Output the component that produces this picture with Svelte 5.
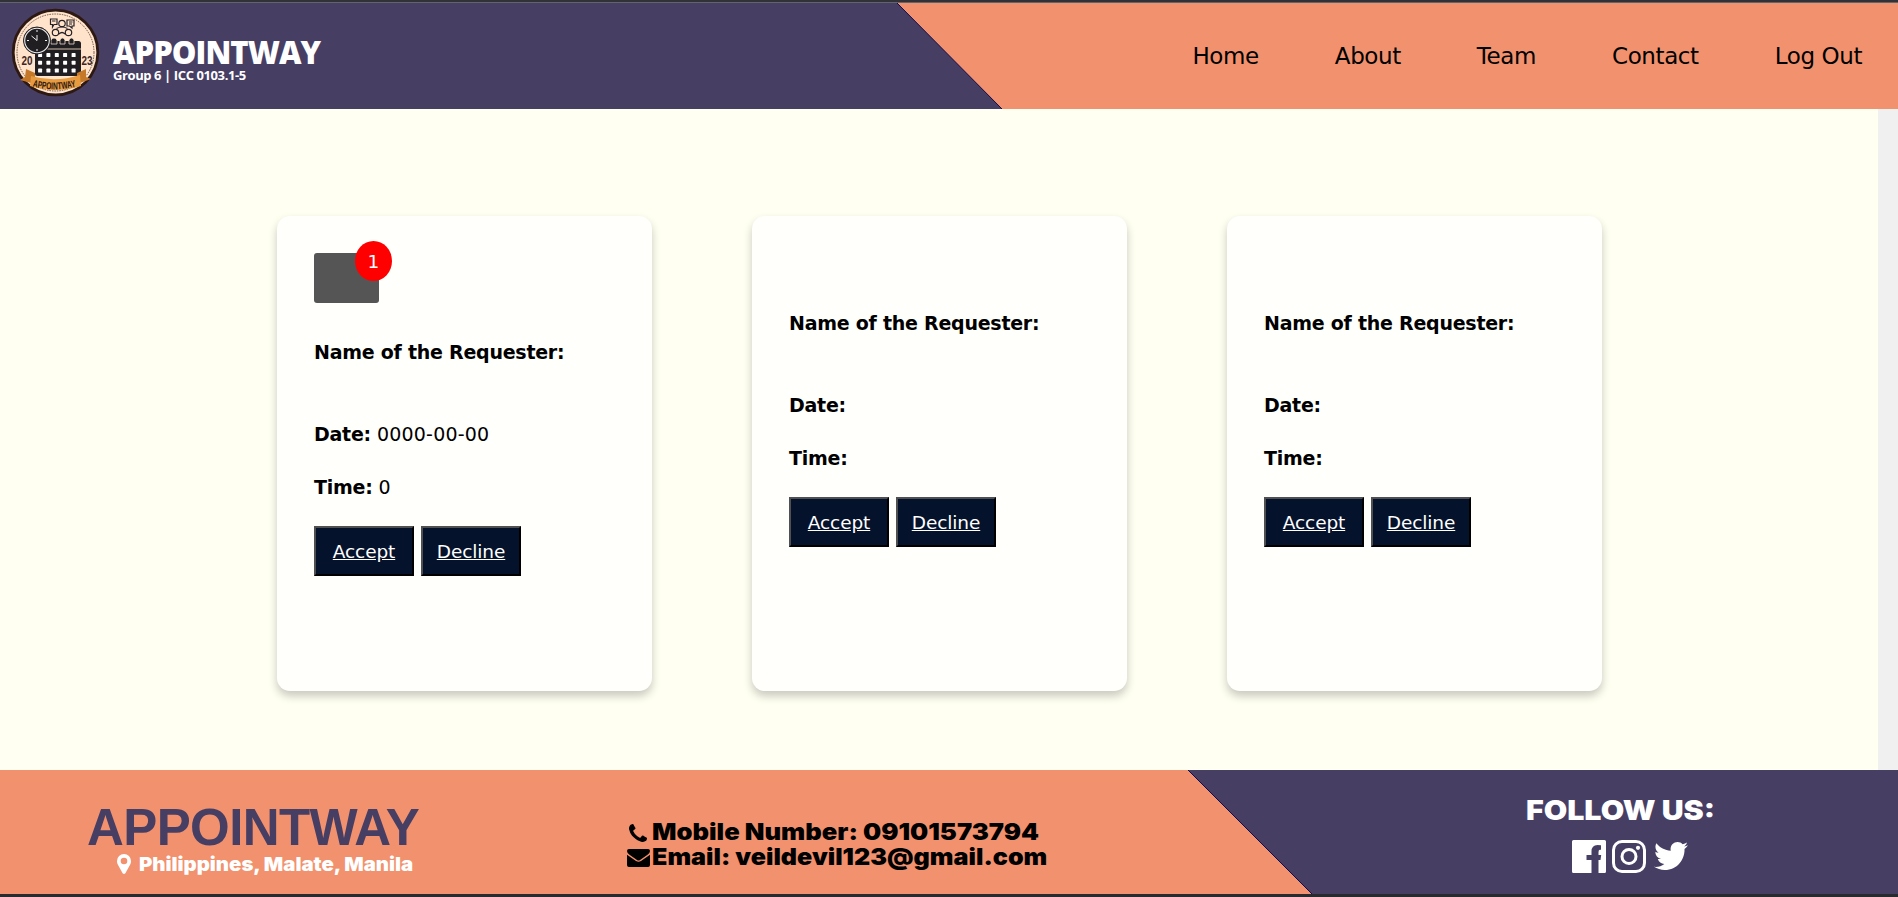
<script>
  const links = ['Home', 'About', 'Team', 'Contact', 'Log Out'];
  const requests = [
    { date: '0000-00-00', time: '0', unread: 1 },
    { date: '', time: '', unread: 0 },
    { date: '', time: '', unread: 0 }
  ];
  const columns = [40, 48.3, 56.7, 65, 73.5];
  const rows = [55, 62.7, 70.5];
</script>

<div class="page">
  <header>
    <svg class="backdrop" viewBox="0 0 1898 106" preserveAspectRatio="none" aria-hidden="true">
      <path d="M0 0H897L1002 106H0z" fill="#473e64" />
      <path d="M897 0L1002 106" stroke="#100b50" stroke-width="1" />
    </svg>
    <div class="brand">
      <svg class="logo" viewBox="11 8 89 89">
        <defs><path id="ribbonArc" d="M32.5 86.500Q55 92.500 78.500 86" /></defs>
        <circle cx="55.500" cy="52.500" r="42.300" fill="#ffe4cb" stroke="#2d1812" stroke-width="2.800" />
        <circle cx="55.500" cy="52.500" r="38.500" fill="none" stroke="#4b352f" stroke-width=".8" stroke-dasharray="1.500 1" />
        <g fill="none" stroke="#252127" stroke-width="1.200">
          <path d="M50.500 19H57V24.500H54L52.500 27V24.500H50.500zM67 20H74V26H72V28L69.500 26H67zM52 21H55.500M69 22H72.500M69 24H72" />
          <circle cx="62" cy="23.500" r="3.200" />
          <circle cx="55.500" cy="32.500" r="3.200" /><circle cx="68.500" cy="32.500" r="3.200" />
          <path d="M56.500 28.500Q62 25.500 67.500 28.500M59 34Q62 31 65 34" />
        </g>
        <rect x="35" y="41" width="46" height="35" rx="2.500" fill="#211e22" />
        <path d="M35 49H81" stroke="#ffe4cb" stroke-width=".8" />
        <g fill="#211e22" stroke="#e8d8ca" stroke-width=".8">
          <path d="M51 44V40Q54 36 57 40V44zM60 44V40Q62.500 36 65 40V44zM69 44V40Q71.500 36 74 40V44z" />
        </g>
        {#each rows as y}
          {#each columns as x}
            <rect x={x - 1.9} y={y - 1.9} width="4" height="4" rx=".7" fill="#fff" />
          {/each}
        {/each}
        <circle cx="37" cy="40.500" r="13.500" fill="#211e22" stroke="#211e22" />
        <circle cx="37" cy="40.500" r="12.300" fill="none" stroke="#eee" stroke-width="1.100" />
        <path d="M37 40.500V35M37 40.500L31.500 36M37 30V32M37 49V51M27 40.500H29M45 40.500H47" stroke="#eee" stroke-width="1" />
        <text x="21.500" y="64.500" class="year" textLength="11" lengthAdjust="spacingAndGlyphs">20</text>
        <text x="81.500" y="64.500" class="year" textLength="11" lengthAdjust="spacingAndGlyphs">23</text>
        <path d="M26 69L35 73V84L20 80L25 77zM86 69L77 73V84L91 79L86 77z" fill="#c57928" />
        <path d="M31 76Q55 83 80 75L81 86Q56 94 30 86z" fill="#e79b3e" />
        <text class="ribbon"><textPath href="#ribbonArc" textLength="44" lengthAdjust="spacingAndGlyphs">APPOINTWAY</textPath></text>
      </svg>
      <div class="names">
        <strong>APPOINTWAY</strong>
        <span>Group 6 | ICC 0103.1-5</span>
      </div>
    </div>
    <nav>
      {#each links as link}<a href="#top">{link}</a>{/each}
    </nav>
  </header>

  <main>
    <section>
      {#each requests as r}
        <article class:notified={r.unread}>
          {#if r.unread}
            <div class="mail"><span>{r.unread}</span></div>
          {/if}
          <p class="name"><b>Name of the Requester:</b></p>
          <p class="date"><b>Date:</b> <span>{r.date}</span></p>
          <p class="time"><b>Time:</b> <span>{r.time}</span></p>
          <div class="actions">
            <button><u>Accept</u></button>
            <button><u>Decline</u></button>
          </div>
        </article>
      {/each}
    </section>
    <div class="track"></div>
  </main>

  <footer>
    <svg class="backdrop" viewBox="0 0 1898 124" preserveAspectRatio="none" aria-hidden="true">
      <path d="M1188 0H1898V124H1312z" fill="#473e64" />
      <path d="M1188 0L1312 124" stroke="#100b50" stroke-width="1" />
    </svg>
    <div class="place">
      <strong>APPOINTWAY</strong>
      <div>
        <svg width="14" height="20" viewBox="0 0 14 20"><path fill="#fff" fill-rule="evenodd" d="M7 0a7 7 0 0 1 7 7c0 1.500-.3 2.500-.8 3.500L8.400 19.200Q7 20.800 5.600 19.200L.8 10.500C.3 9.500 0 8.500 0 7a7 7 0 0 1 7-7zm0 3.700a3.300 3.300 0 1 0 0 6.600 3.300 3.300 0 0 0 0-6.600z" /></svg>
        <span>Philippines, Malate, Manila</span>
      </div>
    </div>
    <div class="contact">
      <div>
        <i><svg width="18" height="18" viewBox="0 128 1408 1408"><path d="M1408 1240q0 27-10 70.500t-21 68.500q-21 50-122 106-94 51-186 51-27 0-53-3.500t-57.500-12.500-47-14.500-55.500-20.500-49-18q-98-35-175-83-127-79-264-216t-216-264q-48-77-83-175-3-9-18-49t-20.500-55.500-14.500-47-12.500-57.500-3.500-53q0-92 51-186 56-101 106-122 25-11 68.500-21t70.500-10q14 0 21 3 18 6 53 76 11 19 30 54t35 63.500 31 53.500q3 4 17.500 25t21.500 35.500 7 28.500q0 20-28.500 50t-62 55-62 53-28.500 46q0 9 5 22.500t8.500 20.500 14 24 11.500 19q76 137 174 235t235 174q2 1 19 11.500t24 14 20.500 8.500 22.500 5q18 0 46-28.500t53-62 55-62 50-28.500q14 0 28.500 7t35.500 21.500 25 17.500q25 15 53.500 31t63.500 35 54 30q70 35 76 53 3 7 3 21z" /></svg></i>
        <span class="mobile">Mobile Number: 09101573794</span>
      </div>
      <div>
        <i><svg width="23" height="18" viewBox="0 0 23 18"><path d="M2 0H21Q23 0 23 2Q23 4 20.500 5.800L13 11Q11.500 12 10 11L2.500 5.800Q0 4 0 2Q0 0 2 0zM0 5.800L9 12Q11.500 13.600 14 12L23 5.800V16Q23 18 21 18H2Q0 18 0 16z" /></svg></i>
        <span class="email">Email: veildevil123@gmail.com</span>
      </div>
    </div>
    <div class="social">
      <strong>FOLLOW US:</strong>
      <div>
        <svg width="34" height="33" viewBox="0 0 34 33"><path fill="#fff" d="M1.500 0H32.500Q34 0 34 1.500V31.500Q34 33 32.500 33H26.500V20H28.500L29.200 15H26.500V12Q26.500 9.700 28 9.700H29V5.200Q27 5 25.500 5Q19.500 5 19.500 11.500V15H14.500V20H19.500V33H1.500Q0 33 0 31.500V1.500Q0 0 1.500 0z" /></svg>
        <svg width="34" height="33" viewBox="0 0 34 33"><g fill="none" stroke="#fff" stroke-width="3"><rect x="1.500" y="1.500" width="31" height="30" rx="8.500" /><circle cx="17" cy="16.500" r="7" /></g><circle cx="26" cy="7.800" r="2.100" fill="#fff" /></svg>
        <svg class="bird" width="34" height="28" viewBox="0 48 512 416" preserveAspectRatio="none"><path fill="#fff" d="M459.370 151.716c.325 4.548.325 9.097.325 13.645 0 138.720-105.583 298.558-298.558 298.558-59.452 0-114.680-17.219-161.137-47.106 8.447.974 16.568 1.299 25.340 1.299 49.055 0 94.213-16.568 130.274-44.832-46.132-.975-84.792-31.188-98.112-72.772 6.498.974 12.995 1.624 19.818 1.624 9.421 0 18.843-1.300 27.614-3.573-48.081-9.747-84.143-51.980-84.143-102.985v-1.299c13.969 7.797 30.214 12.670 47.431 13.319-28.264-18.843-46.781-51.005-46.781-87.391 0-19.492 5.197-37.360 14.294-52.954 51.655 63.675 129.300 105.258 216.365 109.807-1.624-7.797-2.599-15.918-2.599-24.040 0-57.828 46.782-104.934 104.934-104.934 30.213 0 57.502 12.670 76.670 33.137 23.715-4.548 46.456-13.320 66.599-25.340-7.798 24.366-24.366 44.833-46.132 57.827 21.117-2.273 41.584-8.122 60.426-16.243-14.292 20.791-32.161 39.308-52.628 54.253z" /></svg>
      </div>
    </div>
  </footer>
</div>

<style>
  :global(body) { margin: 0; overflow: hidden; }
  .page {
    box-sizing: border-box;
    width: 1898px;
    height: 897px;
    display: flex;
    flex-direction: column;
    border-top: 2px solid #303238;
    border-bottom: 3px solid #292a2e;
    font-family: "DejaVu Sans", Verdana, sans-serif;
    color: #000;
    white-space: nowrap;
  }
  header, footer { position: relative; display: flex; background: #f2916e; flex: none; }
  header { height: 106px; border-top: 1px solid #60656c; justify-content: space-between; }
  .backdrop { position: absolute; inset: 0; width: 100%; height: 100%; }
  .brand, nav, .place, .contact, .social { position: relative; }
  .brand { display: flex; padding: 5px 0 0 11px; color: #fff; }
  .logo { width: 89px; height: 89px; flex: none; }
  .year { font: bold 12px "Liberation Sans", sans-serif; fill: #3c2622; }
  .ribbon { font: bold 10px "Liberation Sans", sans-serif; fill: #2d1812; }
  .names { display: flex; flex-direction: column; padding: 26px 0 0 13px; font-family: "Open Sans", "Noto Sans", sans-serif; font-weight: 700; }
  .names strong { font-size: 31px; line-height: 36px; letter-spacing: -.95px; }
  .names span { font-size: 13px; line-height: 15px; letter-spacing: -.4px; margin-top: -2px; }
  nav { display: flex; gap: 76px; padding: 39px 36px 0 0; }
  nav a { font-size: 23px; line-height: 28px; letter-spacing: -.4px; color: #000; text-decoration: none; }
  main { flex: 1; display: flex; background: #fffff2; min-height: 0; }
  section { flex: 1; display: flex; gap: 100px; padding: 107px 0 0 277px; }
  .track { width: 20px; background: #f0f0f0; }
  article {
    box-sizing: border-box;
    width: 375px;
    height: 475px;
    padding: 96px 37px 0;
    border-radius: 13px;
    background: #fffffc;
    box-shadow: 0 5px 10px rgba(0, 0, 0, .22);
  }
  article.notified { padding-top: 37px; }
  .mail { position: relative; width: 65px; height: 50px; margin-bottom: 38px; border-radius: 3px; background: #555; }
  .mail span {
    position: absolute; top: -12px; right: -13px; width: 37px; height: 40px; border-radius: 50%;
    background: #f00; color: #fff; font-size: 18.500px; line-height: 41px; text-align: center;
  }
  p { margin: 0; font-size: 19px; line-height: 23px; }
  p b { letter-spacing: -.25px; }
  p span { letter-spacing: .2px; }
  .name { margin-bottom: 59px; }
  .date { margin-bottom: 30px; }
  .time { margin-bottom: 27px; }
  .actions { display: flex; gap: 7px; }
  button {
    width: 100px; height: 50px; padding: 0; border: 2px solid; border-color: #505050 #000 #000 #505050;
    background: #05122b; color: #fff; font: 18.500px "DejaVu Sans", sans-serif; letter-spacing: -.1px;
  }
  footer { height: 124px; }
  .place { width: 565px; padding: 32px 0 0 88px; color: #fff; }
  .place strong { display: block; font: bold 51px/52px "Liberation Sans", sans-serif; letter-spacing: -.6px; margin-left: -1px; color: #473e64; }
  .place div { display: flex; gap: 8px; padding-left: 29px; font: 900 19px/20px Inter, sans-serif; }
  .contact { width: 800px; padding-top: 50px; font: 900 23px/25px Inter, sans-serif; }
  .contact div { display: flex; height: 25px; }
  .contact i { width: 26px; display: flex; align-items: center; justify-content: center; margin-left: -28px; padding-right: 1px; }
  .place span, .contact span, .social strong { transform-origin: 0 50%; }
  .place span { transform: translateY(1px) scaleX(1.07); }
  .mobile { transform: scaleX(1.113); }
  .email { transform: scaleX(1.092); }
  .social { color: #fff; font-family: Inter, sans-serif; padding: 25px 0 0 73px; }
  .social strong { display: block; font-size: 27px; line-height: 32px; font-weight: 900; transform: scaleX(1.123); }
  .social div { display: flex; gap: 6px; padding: 13px 0 0 46px; }
  .bird { margin: 2px 0 0 2px; }
</style>
